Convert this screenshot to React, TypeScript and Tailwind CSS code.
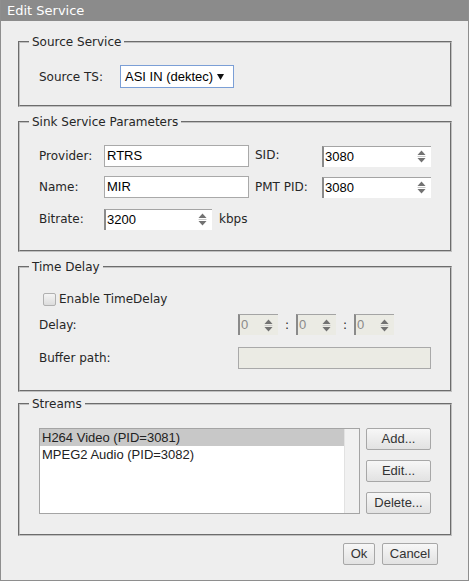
import React from 'react';

const label = "font-['DejaVu_Sans',Verdana,sans-serif] text-[12px] leading-4 text-[#262626]";
const arial = "font-['Liberation_Sans',Arial,sans-serif] text-[13px]";

function Arrows() {
  return (
    <svg width="9" height="13" viewBox="0 0 9 13" className="shrink-0">
      <polygon points="4.5,0.5 8.5,5 0.5,5" fill="#727272" />
      <line x1="0.5" y1="6.5" x2="8.5" y2="6.5" stroke="#c8c8c8" />
      <polygon points="0.5,8 8.5,8 4.5,12.5" fill="#727272" />
    </svg>
  );
}

function Spinner({ value, className = '', disabled = false }: { value: string; className?: string; disabled?: boolean }) {
  return (
    <div
      className={`flex items-center h-[21px] border-l-2 border-t border-l-[#8a8a8a] border-t-[#a4a4a4] pr-[5px] ${
        disabled ? 'bg-[#ebebe4] text-[#8a8a8a]' : 'bg-white text-black'
      } ${className}`}
    >
      <span className={`flex-1 pl-px ${arial}`}>{value}</span>
      <Arrows />
    </div>
  );
}

function TextBox({ value, className = '' }: { value: string; className?: string }) {
  return (
    <div className={`flex items-center h-[22px] bg-white border border-[#a9a9a9] pl-[2px] text-black ${arial} ${className}`}>
      {value}
    </div>
  );
}

function Button({ text, className = '' }: { text: string; className?: string }) {
  return (
    <button
      className={`h-[22px] rounded-[2px] border border-[#a7a7a7] bg-gradient-to-b from-[#f7f7f7] to-[#e2e2e2] text-[#333] ${arial} ${className}`}
    >
      {text}
    </button>
  );
}

function Group({ title, className = '', children }: { title: string; className?: string; children: React.ReactNode }) {
  return (
    <fieldset className={`w-[434px] border-2 [border-style:groove] border-[#c0c0c0] px-[9px] ${className}`}>
      <legend className={`px-[3px] ${label}`}>{title}</legend>
      <div className="pl-[10px]">{children}</div>
    </fieldset>
  );
}

export default function App() {
  return (
    <div className="w-[469px] h-[581px] bg-[#eeeeee] border-x border-b border-[#8e8e8e] flex flex-col">
      <div className="h-[21px] shrink-0 bg-[#8b8b8b] pl-[6px] flex items-center text-white font-['DejaVu_Sans',Verdana,sans-serif] text-[13px]">
        Edit Service
      </div>

      <div className="pl-[17px] pt-[13px] flex flex-col">
        <Group title="Source Service" className="pt-[15px] pb-[17px]">
          <div className="flex items-center">
            <span className={`w-[81px] ${label}`}>Source TS:</span>
            <div className={`flex items-center w-[114px] h-[23px] bg-white border border-[#7b9fd6] pl-[4px] pr-[9px] text-black ${arial}`}>
              <span className="flex-1">ASI IN (dektec)</span>
              <svg width="7" height="6" viewBox="0 0 7 6">
                <polygon points="0,0 7,0 3.5,6" fill="#111" />
              </svg>
            </div>
          </div>
        </Group>

        <Group title="Sink Service Parameters" className="mt-[7px] pt-[15px] pb-[20px]">
          <div className="flex flex-col gap-[9px]">
            <div className="flex items-center h-[22px]">
              <span className={`w-[65px] ${label}`}>Provider:</span>
              <TextBox value="RTRS" className="w-[145px]" />
              <span className={`ml-[6px] w-[67px] -mt-[3px] ${label}`}>SID:</span>
              <Spinner value="3080" className="w-[109px]" />
            </div>
            <div className="flex items-center h-[22px]">
              <span className={`w-[65px] ${label}`}>Name:</span>
              <TextBox value="MIR" className="w-[145px]" />
              <span className={`ml-[6px] w-[67px] ${label}`}>PMT PID:</span>
              <Spinner value="3080" className="w-[109px]" />
            </div>
            <div className="flex items-center h-[22px] mt-px">
              <span className={`w-[65px] ${label}`}>Bitrate:</span>
              <Spinner value="3200" className="w-[108px]" />
              <span className={`ml-[7px] ${label}`}>kbps</span>
            </div>
          </div>
        </Group>

        <Group title="Time Delay" className="mt-[7px] pt-[16px] pb-[21px]">
          <div className="flex items-center h-[16px]">
            <span className="ml-[4px] w-[13px] h-[13px] rounded-[2px] border border-[#b0b0b0] bg-gradient-to-b from-[#f4f4f4] to-[#dcdcdc]" />
            <span className={`ml-[3px] ${label}`}>Enable TimeDelay</span>
          </div>
          <div className="flex items-center h-[21px] mt-[7px]">
            <span className={`w-[199px] ${label}`}>Delay:</span>
            <Spinner value="0" disabled className="w-[40px]" />
            <span className={`w-[18px] text-center ${label}`}>:</span>
            <Spinner value="0" disabled className="w-[40px]" />
            <span className={`w-[18px] text-center ${label}`}>:</span>
            <Spinner value="0" disabled className="w-[40px]" />
          </div>
          <div className="flex items-center h-[22px] mt-[12px]">
            <span className={`w-[199px] ${label}`}>Buffer path:</span>
            <div className="w-[193px] h-[22px] bg-[#ebebe4] border border-[#a9a9a9]" />
          </div>
        </Group>

        <Group title="Streams" className="mt-[4px] pt-[16px] pb-[20px]">
          <div className="flex">
            <div className={`flex w-[321px] h-[86px] bg-white border border-[#a4a4a4] text-[#222] ${arial}`}>
              <div className="flex-1 flex flex-col">
                <div className="h-[17px] leading-[17px] bg-[#c8c8c8] pl-[2px]">H264 Video (PID=3081)</div>
                <div className="h-[17px] leading-[17px] pl-[2px]">MPEG2 Audio (PID=3082)</div>
              </div>
              <div className="w-[15px] bg-[#f1f1f1] border-l border-[#e2e2e2]" />
            </div>
            <div className="ml-[6px] flex flex-col gap-[10px]">
              <Button text="Add..." className="w-[65px]" />
              <Button text="Edit..." className="w-[65px]" />
              <Button text="Delete..." className="w-[65px]" />
            </div>
          </div>
        </Group>

        <div className="w-[434px] pr-[14px] mt-[7px] flex justify-end gap-[7px]">
          <Button text="Ok" className="w-[32px]" />
          <Button text="Cancel" className="w-[56px]" />
        </div>
      </div>
    </div>
  );
}
